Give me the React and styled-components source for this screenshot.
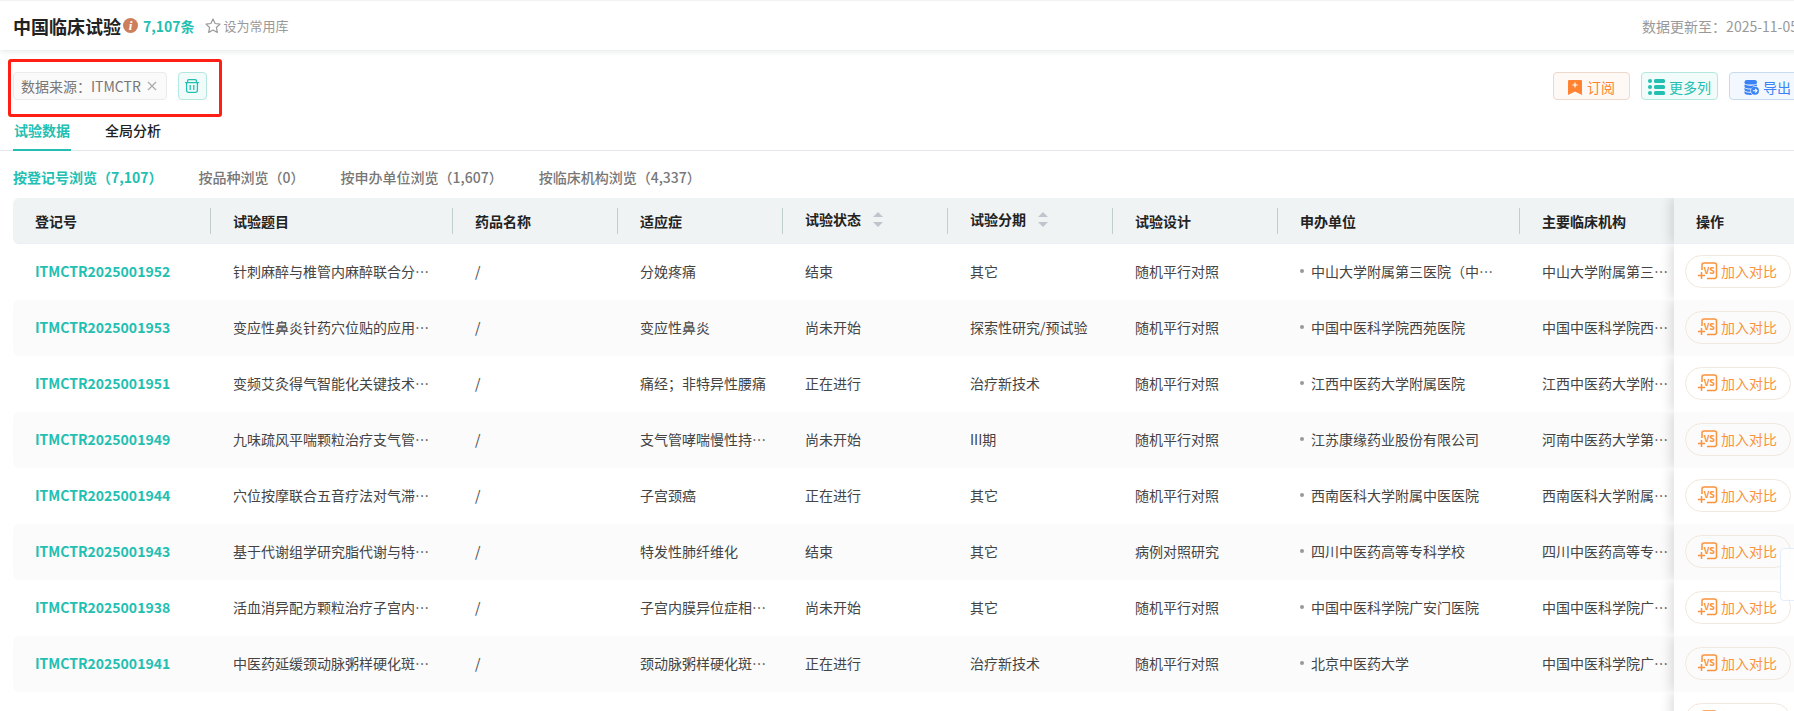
import React, { useState } from 'react';
import styled, { createGlobalStyle } from 'styled-components';

const COLUMNS = [
  { key: 'id', title: '登记号', width: 198 },
  { key: 'topic', title: '试验题目', width: 242 },
  { key: 'drug', title: '药品名称', width: 165 },
  { key: 'disease', title: '适应症', width: 165 },
  { key: 'status', title: '试验状态', width: 165, sortable: true },
  { key: 'phase', title: '试验分期', width: 165, sortable: true },
  { key: 'design', title: '试验设计', width: 165 },
  { key: 'sponsor', title: '申办单位', width: 242 },
  { key: 'site', title: '主要临床机构', width: 154 },
];

const ROWS = [
  ['ITMCTR2025001952', '针刺麻醉与椎管内麻醉联合分…', '/', '分娩疼痛', '结束', '其它', '随机平行对照', '中山大学附属第三医院（中…', '中山大学附属第三…'],
  ['ITMCTR2025001953', '变应性鼻炎针药穴位贴的应用…', '/', '变应性鼻炎', '尚未开始', '探索性研究/预试验', '随机平行对照', '中国中医科学院西苑医院', '中国中医科学院西…'],
  ['ITMCTR2025001951', '变频艾灸得气智能化关键技术…', '/', '痛经；非特异性腰痛', '正在进行', '治疗新技术', '随机平行对照', '江西中医药大学附属医院', '江西中医药大学附…'],
  ['ITMCTR2025001949', '九味疏风平喘颗粒治疗支气管…', '/', '支气管哮喘慢性持…', '尚未开始', 'III期', '随机平行对照', '江苏康缘药业股份有限公司', '河南中医药大学第…'],
  ['ITMCTR2025001944', '穴位按摩联合五音疗法对气滞…', '/', '子宫颈癌', '正在进行', '其它', '随机平行对照', '西南医科大学附属中医医院', '西南医科大学附属…'],
  ['ITMCTR2025001943', '基于代谢组学研究脂代谢与特…', '/', '特发性肺纤维化', '结束', '其它', '病例对照研究', '四川中医药高等专科学校', '四川中医药高等专…'],
  ['ITMCTR2025001938', '活血消异配方颗粒治疗子宫内…', '/', '子宫内膜异位症相…', '尚未开始', '其它', '随机平行对照', '中国中医科学院广安门医院', '中国中医科学院广…'],
  ['ITMCTR2025001941', '中医药延缓颈动脉粥样硬化斑…', '/', '颈动脉粥样硬化斑…', '正在进行', '治疗新技术', '随机平行对照', '北京中医药大学', '中国中医科学院广…'],
  ['', '', '', '', '', '', '', '', ''],
];

const VIEWS = [
  '按登记号浏览（7,107）',
  '按品种浏览（0）',
  '按申办单位浏览（1,607）',
  '按临床机构浏览（4,337）',
];

const InfoIcon = () => (
  <svg width="15" height="15" viewBox="0 0 15 15" aria-hidden="true">
    <circle cx="7.5" cy="7.5" r="7.5" fill="#cd7f5b" />
    <text
      x="7.5"
      y="12"
      fill="#fff"
      fontFamily="Liberation Serif, serif"
      fontSize="13"
      fontStyle="italic"
      fontWeight="700"
      textAnchor="middle"
    >
      i
    </text>
  </svg>
);

const StarIcon = () => (
  <svg width="16" height="16" viewBox="0 0 16 16" aria-hidden="true">
    <path
      d="M8 1l2.1 4.5 4.9.6-3.6 3.4.9 4.9L8 12l-4.3 2.4.9-4.9L1 6.1l4.9-.6z"
      fill="none"
      stroke="#999"
      strokeWidth="1.2"
      strokeLinejoin="round"
    />
  </svg>
);

const CloseIcon = () => (
  <svg width="10" height="10" viewBox="0 0 10 10" aria-hidden="true">
    <path d="M1 1l8 8M9 1L1 9" stroke="#aaa" strokeWidth="1.2" />
  </svg>
);

const TrashIcon = () => (
  <svg width="14" height="14" viewBox="0 0 14 14" fill="none" stroke="#22bfb2" strokeWidth="1.3" aria-hidden="true">
    <path d="M0 3.6h14M2.6 3.6V1.7q0-1 1-1h6.800q1 0 1 1v1.900M1.600 3.600v8q0 1.700 1.700 1.700h7.400q1.700 0 1.700-1.700v-8M5.200 6v5M8.800 6v5" />
  </svg>
);

const BookmarkIcon = () => (
  <svg width="14" height="15" viewBox="0 0 14 15" aria-hidden="true">
    <path d="M1 0h12q1 0 1 1v14l-7-3.600L0 15V1q0-1 1-1z" fill="#ff8330" />
    <path d="M7 2.500v5M4.500 5h5" stroke="#fff" strokeWidth="1.200" />
  </svg>
);

const ListIcon = () => (
  <svg width="17" height="16" viewBox="0 0 17 16" fill="#22bfb2" aria-hidden="true">
    <circle cx="2" cy="2" r="2" />
    <circle cx="2" cy="8" r="2" />
    <circle cx="2" cy="14" r="2" />
    <rect x="6" y="0" width="11" height="4" rx="1.5" />
    <rect x="6" y="6" width="11" height="4" rx="1.5" />
    <rect x="6" y="12" width="11" height="4" rx="1.5" />
  </svg>
);

const ExportIcon = () => (
  <svg width="15" height="15" viewBox="0 0 15 15" aria-hidden="true">
    <g fill="#3b82f6">
      <rect x="0.5" y="0" width="12.5" height="4.4" rx="2.2" />
      <path d="M.5 4.600q6.200 2.400 12.500 0v1.600q-3.600-.6-5.600 2.300Q.5 8.700.5 6.500z" />
      <path d="M.5 8q2 1.600 6.200 1.500-.3 1-.2 2.300Q.5 11.800.5 9.800z" />
      <path d="M.5 11.300q2 1.600 6.300 1.500.5 1.300 1.500 2.100Q.5 15.200.5 13z" />
      <circle cx="11" cy="10.800" r="4" />
    </g>
    <path d="M8.800 10.800h4M11.200 9l1.800 1.800-1.800 1.800" fill="none" stroke="#fff" strokeWidth="1.1" />
  </svg>
);

const CompareIcon = () => (
  <svg width="20" height="18" viewBox="0 0 20 18" aria-hidden="true">
    <g fill="none" stroke="#fa933c" strokeWidth="1.5">
      <path d="M4 8V3q0-2 2-2h10.500q2 0 2 2v11.500q0 2-2 2H9" />
      <path d="M0 13.500h7M3.500 10v7" />
    </g>
    <text
      x="11.300"
      y="11.700"
      fill="#fa933c"
      fontFamily="Noto Sans CJK SC, sans-serif"
      fontSize="9"
      fontWeight="700"
      textAnchor="middle"
    >
      VS
    </text>
  </svg>
);

const SortIcon = () => (
  <svg width="10" height="16" viewBox="0 0 10 16" fill="#c0c4cc" aria-hidden="true">
    <path d="M5 0l5 5H0zM5 15l5-5H0z" />
  </svg>
);

const Cell = ({ column, value }) => {
  if (column.key === 'id') {
    return value ? <TrialLink href="#">{value}</TrialLink> : null;
  }
  if (column.key === 'sponsor') {
    return value ? <Sponsor>{value}</Sponsor> : null;
  }
  return value;
};

const App = () => {
  const [view, setView] = useState(0);
  return (
    <Page>
      <GlobalStyle />
      <Header>
        <Title>中国临床试验</Title>
        <InfoIcon />
        <Count>7,107条</Count>
        <FavoriteButton type="button">
          <StarIcon />
          设为常用库
        </FavoriteButton>
        <Updated>数据更新至：2025-11-05</Updated>
      </Header>
      <Toolbar>
        <Filters>
          <Tag>
            数据来源：ITMCTR
            <CloseButton type="button" aria-label="移除">
              <CloseIcon />
            </CloseButton>
          </Tag>
          <ClearButton type="button" aria-label="清空">
            <TrashIcon />
          </ClearButton>
          <Highlight />
        </Filters>
        <Actions>
          <ActionButton type="button" $color="#ff8330" $bg="#fff9f5" $border="#ecd9cb">
            <BookmarkIcon />
            订阅
          </ActionButton>
          <ActionButton type="button" $color="#22bfb2" $bg="#f1fcfa" $border="#b5e6df" $tight>
            <ListIcon />
            更多列
          </ActionButton>
          <ActionButton type="button" $color="#3b82f6" $bg="#f3f8ff" $border="#c8dbee" $tight>
            <ExportIcon />
            导出
          </ActionButton>
        </Actions>
      </Toolbar>
      <Tabs>
        <Tab type="button" $active>试验数据</Tab>
        <Tab type="button">全局分析</Tab>
      </Tabs>
      <Views>
        {VIEWS.map((label, i) => (
          <View key={label} type="button" $active={view === i} onClick={() => setView(i)}>
            {label}
          </View>
        ))}
      </Views>
      <TableWrap>
        <Table>
          <thead>
            <tr>
              {COLUMNS.map((column, i) => (
                <Th key={column.key} $width={column.width}>
                  <ThInner $line={i < COLUMNS.length - 1} $sortable={column.sortable}>
                    {column.title}
                    {column.sortable && (
                      <SortButton type="button" aria-label="排序">
                        <SortIcon />
                      </SortButton>
                    )}
                  </ThInner>
                </Th>
              ))}
              <FixedTh $width={133}>
                <ThInner>操作</ThInner>
              </FixedTh>
            </tr>
          </thead>
          <tbody>
            {ROWS.map((row, r) => (
              <Row key={r}>
                {COLUMNS.map((column, i) => (
                  <Td key={column.key}>
                    <Cell column={column} value={row[i]} />
                  </Td>
                ))}
                <FixedTd>
                  <CompareButton type="button">
                    <CompareIcon />
                    加入对比
                  </CompareButton>
                </FixedTd>
              </Row>
            ))}
          </tbody>
        </Table>
      </TableWrap>
      <SidePanel />
    </Page>
  );
};

export default App;

const GlobalStyle = createGlobalStyle`
  * {
    box-sizing: border-box;
  }

  body {
    margin: 0;
    overflow: hidden;
    background: #fff;
    color: #444;
    font: 14px/20px 'Noto Sans CJK SC', sans-serif;
  }

  button {
    margin: 0;
    padding: 0;
    border: 0;
    background: none;
    color: inherit;
    font: inherit;
    cursor: pointer;
  }

  svg {
    flex: none;
    display: block;
  }
`;

/* wider than the window on small screens, the right edge runs off */
const Page = styled.div`
  min-width: 1820px;
`;

const Header = styled.header`
  display: flex;
  align-items: center;
  height: 50px;
  padding: 0 22px 0 13px;
  border-top: 1px solid #f2f3f5;
  box-shadow: 0 1px 6px rgba(0, 30, 40, 0.12);
`;

const Title = styled.h1`
  margin: 0 2px 0 0;
  color: #222;
  font-size: 18px;
  font-weight: 700;
`;

const Count = styled.span`
  margin: 0 10px 0 5px;
  color: #22bfb2;
  font-weight: 700;
`;

const FavoriteButton = styled.button`
  display: flex;
  align-items: center;
  gap: 3px;
  color: #999;
  font-size: 13px;
`;

const Updated = styled.span`
  margin-left: auto;
  color: #999;
`;

const Toolbar = styled.div`
  display: flex;
  justify-content: space-between;
  padding: 22px 14px 18px 13px;
`;

const Filters = styled.div`
  position: relative;
  display: flex;
  gap: 11px;
`;

const Tag = styled.span`
  display: flex;
  align-items: center;
  gap: 6px;
  height: 28px;
  padding: 0 9px 0 7px;
  border: 1px solid #ebebeb;
  border-radius: 4px;
  background: #fafafa;
  color: #777;
`;

const CloseButton = styled.button`
  display: flex;
`;

const ClearButton = styled.button`
  display: flex;
  align-items: center;
  justify-content: center;
  width: 29px;
  height: 28px;
  border: 1px solid #b5e6df;
  border-radius: 4px;
  background: #f1fcfa;
`;

const Highlight = styled.div`
  position: absolute;
  inset: -13px -15px -17px -5px;
  border: 3px solid #ff1f14;
  border-radius: 3px;
  pointer-events: none;
`;

const Actions = styled.div`
  display: flex;
  gap: 11px;
`;

const ActionButton = styled.button`
  display: flex;
  align-items: center;
  justify-content: center;
  gap: ${({ $tight }) => ($tight ? 4 : 5)}px;
  width: 77px;
  height: 28px;
  padding-top: 2px;
  border: 1px solid ${({ $border }) => $border};
  border-radius: 4px;
  background: ${({ $bg }) => $bg};
  color: ${({ $color }) => $color};
`;

const Tabs = styled.nav`
  display: flex;
  gap: 33px;
  height: 33px;
  padding: 0 13px;
  border-bottom: 1px solid #e6e8ee;
`;

const Tab = styled.button`
  min-width: 58px;
  height: 33px;
  padding-bottom: 7px;
  border-bottom: 2px solid ${({ $active }) => ($active ? '#22bfb2' : 'transparent')};
  color: ${({ $active }) => ($active ? '#22bfb2' : '#222')};
  font-weight: ${({ $active }) => ($active ? 700 : 500)};
`;

const Views = styled.div`
  display: flex;
  gap: 36px;
  padding: 16px 13px 11px;
`;

const View = styled.button`
  color: ${({ $active }) => ($active ? '#22bfb2' : '#777')};
  font-weight: ${({ $active }) => ($active ? 700 : 500)};
`;

const TableWrap = styled.div`
  padding: 0 13px;
`;

const Table = styled.table`
  width: 100%;
  table-layout: fixed;
  border-collapse: separate;
  border-spacing: 0;
`;

const Th = styled.th`
  width: ${({ $width }) => $width}px;
  height: 46px;
  padding: 0;
  border-bottom: 1px solid #ebeef5;
  background: #eff3f4;
  color: #222;
  font-weight: 700;
  text-align: left;

  &:first-child {
    border-top-left-radius: 6px;
    border-bottom-left-radius: 6px;
  }
`;

const ThInner = styled.div`
  display: flex;
  align-items: center;
  gap: 12px;
  height: 26px;
  padding: ${({ $sortable }) => ($sortable ? '0 22px 4px' : '0 22px')};
  border-right: 1px solid ${({ $line }) => ($line ? '#bfcfce' : 'transparent')};
`;

const SortButton = styled.button`
  display: flex;
  padding-top: 2px;
`;

const Td = styled.td`
  height: 56px;
  padding: 0 0 2px 22px;
  overflow: hidden;
  white-space: nowrap;
`;

const Row = styled.tr`
  &:nth-child(even) > td {
    background: #fbfbfb;
  }

  & > td:first-child {
    border-radius: 6px 0 0 6px;
  }
`;

const fixedShadow = '-4px 0 10px rgba(0, 0, 0, 0.12)';

const FixedTh = styled(Th)`
  box-shadow: ${fixedShadow};
  clip-path: inset(0 0 0 -14px);
`;

const FixedTd = styled.td`
  padding: 0 0 2px 11px;
  background: #fff;
  box-shadow: ${fixedShadow};
  clip-path: inset(0 0 0 -14px);
`;

const TrialLink = styled.a`
  color: #22bfb2;
  font-weight: 700;
  text-decoration: none;
`;

const Sponsor = styled.span`
  display: flex;
  align-items: center;
  gap: 7px;

  &::before {
    content: '';
    width: 4px;
    height: 4px;
    border-radius: 50%;
    background: #999;
  }
`;

const CompareButton = styled.button`
  display: flex;
  align-items: center;
  gap: 3px;
  width: 106px;
  height: 33px;
  padding-left: 12px;
  border: 1px solid #f1e8df;
  border-radius: 17px;
  color: #fa933c;
`;

const SidePanel = styled.aside`
  position: fixed;
  right: -40px;
  top: 548px;
  width: 54px;
  height: 53px;
  border: 1px solid #e3edfb;
  border-radius: 4px;
  background: rgba(255, 255, 255, 0.8);
`;
